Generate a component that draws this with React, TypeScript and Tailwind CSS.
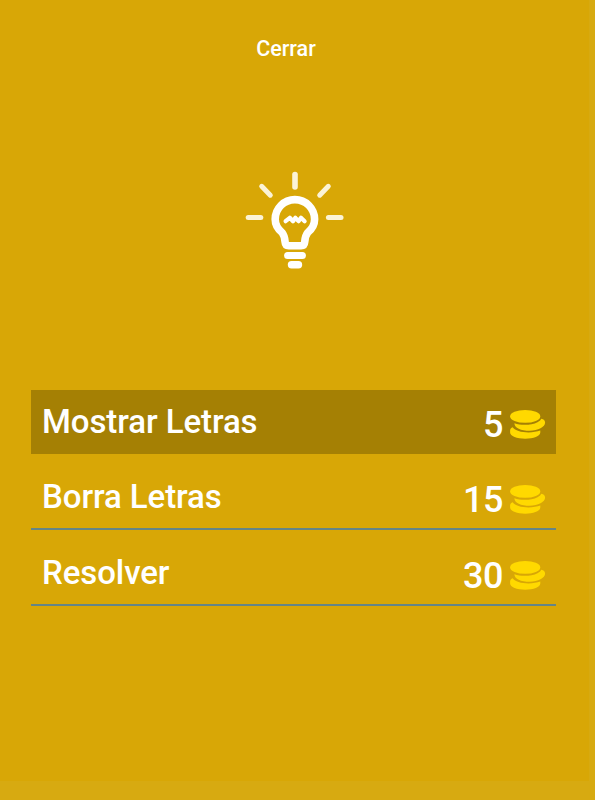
type Hint = { label: string; cost: number; active?: boolean };

const hints: Hint[] = [
  { label: 'Mostrar Letras', cost: 5, active: true },
  { label: 'Borra Letras', cost: 15 },
  { label: 'Resolver', cost: 30 },
];

function Bulb() {
  return (
    <svg className="block h-[120px] w-[120px]" viewBox="0 0 120 120" fill="none" strokeLinecap="round" strokeLinejoin="round">
      <g stroke="#fbf3d6" strokeWidth="5">
        <path d="M60 14.5V27" strokeWidth="5.6" />
        <path d="M26.7 26.3l8.6 8.9" />
        <path d="M93.3 26.3l-8.6 8.9" />
        <path d="M13.2 57.5h12.6" />
        <path d="M93.4 57.5H106" />
      </g>
      <path
        d="M50.1 82c-.3-4.2-.7-6.600-3-9.400C42.600 69 40.200 65 40.200 59.300a19.700 19.700 0 0 1 39.400 0c0 5.700-2.400 9.700-6.900 13.300-2.300 2.800-2.700 5.200-3 9.400q-.3 3.800-3.600 3.800H53.700q-3.300 0-3.600-3.800z"
        stroke="#fff"
        strokeWidth="7.6"
      />
      <path d="M50.6 61.2l4.200-3.400 3.200 3.400 2.400-3.400 3.100 3.400 2.500-3.400 3.600 3.400" stroke="#fff" strokeWidth="4.2" />
      <path d="M52.6 95.5h14.8" stroke="#fff" strokeWidth="7" />
      <path d="M56.5 104.8h7" stroke="#fff" strokeWidth="7.4" />
    </svg>
  );
}

function Coins() {
  return (
    <svg className="block h-[30px] w-[36px] shrink-0" viewBox="0 0 36 30" fill="#ffd900">
      <ellipse cx="15.2" cy="6.4" rx="15.1" ry="6.4" />
      <path d="M4.4 13.2C11 15.500 21.500 15.300 27.500 12.200 29.800 11 30.900 9.900 31.200 8.800c2.600.4 3.900 1.800 3.900 3.700 0 4.600-7 8.200-15.500 8.200-8.600 0-15.200-2.600-15.200-7.500z" />
      <path d="M2.7 17.200C5 20.500 11 22.400 18.500 22.400c4.600 0 8.500-.6 11.800-1.800v1.900c0 3.500-6.800 6.200-15.100 6.200S.1 26 .1 22.500v-2c0-1.600 1-2.700 2.600-3.300z" />
    </svg>
  );
}

function HintRow({ label, cost, active }: Hint) {
  return (
    <div
      className={
        'flex items-center justify-between pl-[11px] pr-[10px] ' +
        (active ? 'h-[63.5px] bg-[#a58004]' : 'mt-[12px] h-[64px] border-b-2 border-[#648587]')
      }
    >
      <span className="text-[33px] leading-[62px] font-medium tracking-[-0.08px]">{label}</span>
      <div className="flex items-center gap-[7px] pt-[6px]">
        <span className="text-[36px] leading-[56px] font-medium tracking-[-0.5px]">{cost}</span>
        <Coins />
      </div>
    </div>
  );
}

export default function App() {
  return (
    <div className="h-[800px] w-[599px] overflow-hidden bg-white font-['Roboto',sans-serif] text-white">
      <div className="h-full w-[595px] bg-[#d7aa11]">
        <main className="h-[781px] w-[589px] bg-[#d8a706]">
          <div className="flex h-[160px] justify-center pt-[37px] pr-[17px]">
            <button className="h-[24px] text-[21.5px] leading-[24px] font-medium">Cerrar</button>
          </div>
          <div className="flex h-[230px] pl-[235px]">
            <Bulb />
          </div>
          <div className="ml-[31px] w-[525px]">
            {hints.map((hint) => (
              <HintRow key={hint.label} {...hint} />
            ))}
          </div>
        </main>
      </div>
    </div>
  );
}
